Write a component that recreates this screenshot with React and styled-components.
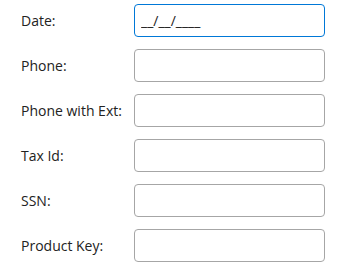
import React from 'react'
import styled, { createGlobalStyle } from 'styled-components'

const GlobalStyle = createGlobalStyle`
  body {
    margin: 0;
    background: #fff;
    font-family: "Open Sans", sans-serif;
  }
`

const Form = styled.div`
  display: grid;
  grid-template-columns: 113px 191px;
  row-gap: 12px;
  padding: 4px 0 0 21px;
`

const Label = styled.label`
  display: flex;
  align-items: center;
  font-size: 14px;
  color: #222;
`

const Input = styled.input`
  box-sizing: border-box;
  width: 191px;
  height: 33px;
  padding: 0 6px;
  border: 1px solid ${p => (p.$focused ? '#0078d7' : '#a6a6a6')};
  border-radius: 4px;
  font-family: "Open Sans", sans-serif;
  font-size: 14px;
  color: #222;
  outline: none;
`

const fields = [
  { label: 'Date:', value: '__/__/____', focused: true },
  { label: 'Phone:' },
  { label: 'Phone with Ext:' },
  { label: 'Tax Id:' },
  { label: 'SSN:' },
  { label: 'Product Key:' }
]

export default function App() {
  return (
    <>
      <GlobalStyle />
      <Form>
        {fields.map(f => (
          <React.Fragment key={f.label}>
            <Label>{f.label}</Label>
            <Input $focused={f.focused} defaultValue={f.value || ''} />
          </React.Fragment>
        ))}
      </Form>
    </>
  )
}
